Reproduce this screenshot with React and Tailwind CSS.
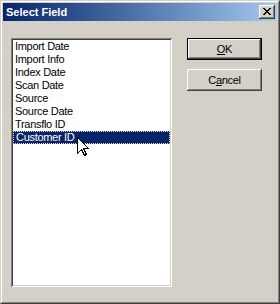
import React from "react";

const fields = [
  "Import Date",
  "Import Info",
  "Index Date",
  "Scan Date",
  "Source",
  "Source Date",
  "Transflo ID",
  "Customer ID",
];

const raised =
  "shadow-[inset_-1px_-1px_0_#404040,inset_1px_1px_0_#ffffff,inset_-2px_-2px_0_#808080]";

const CloseGlyph = () => (
  <svg width="8" height="7" viewBox="0 0 8 7" shapeRendering="crispEdges">
    <path
      fill="#000"
      d="M0 0h2v1H0zM6 0h2v1H6zM1 1h2v1H1zM5 1h2v1H5zM2 2h4v1H2zM3 3h2v1H3zM2 4h4v1H2zM1 5h2v1H1zM5 5h2v1H5zM0 6h2v1H0zM6 6h2v1H6z"
    />
  </svg>
);

const Cursor = () => (
  <svg width="13" height="20" viewBox="0 0 13 20" shapeRendering="crispEdges">
    <path
      d="M0.5 0.5 V16.5 L4.5 12.5 L7.5 18.5 L9.5 17.5 L6.5 11.5 H11.5 Z"
      fill="#fff"
      stroke="#000"
      strokeWidth="1"
    />
  </svg>
);

const App = () => {
  const selected = 7;

  return (
    <div
      className="relative w-[280px] h-[304px] bg-[#d4d0c8] border border-t-[#d4d0c8] border-l-[#d4d0c8] border-r-[#404040] border-b-[#404040] text-[11px] text-black"
      style={{ fontFamily: '"Liberation Sans", Arial, sans-serif' }}
    >
      <div className="h-full border border-t-white border-l-white border-r-[#808080] border-b-[#808080] p-px flex flex-col">
        {/* title bar */}
        <div className="h-[18px] flex items-center justify-between bg-gradient-to-r from-[#0a246a] to-[#a6caf0] pl-[3px] pr-[2px]">
          <span className="font-bold text-white leading-[18px]">Select Field</span>
          <button
            className={`w-[16px] h-[14px] bg-[#d4d0c8] flex items-center justify-center pb-px ${raised}`}
          >
            <CloseGlyph />
          </button>
        </div>

        {/* body */}
        <div className="flex pl-[8px] pt-[17px] tracking-[-0.3px]">
          <div className="w-[161px] h-[249px] bg-white p-[2px] shadow-[inset_1px_1px_0_#808080,inset_-1px_-1px_0_#ffffff,inset_2px_2px_0_#404040,inset_-2px_-2px_0_#d4d0c8]">
            {fields.map((f, i) => (
              <div
                key={f}
                className={
                  i === selected
                    ? "h-[13px] leading-[13px] pl-[3px] bg-[#0a246a] text-white outline-1 outline-dotted outline-[#e8e4b0] -outline-offset-1 whitespace-nowrap"
                    : "h-[13px] leading-[13px] pl-[2px] whitespace-nowrap"
                }
              >
                {f}
              </div>
            ))}
          </div>

          <div className="ml-[15px] flex flex-col gap-[9px]">
            <button className="w-[75px] h-[22px] border border-black bg-[#d4d0c8]">
              <div className={`h-full flex items-center justify-center ${raised}`}>
                <span>
                  <span className="underline underline-offset-[1px]">O</span>K
                </span>
              </div>
            </button>
            <button
              className={`w-[75px] h-[22px] bg-[#d4d0c8] flex items-center justify-center ${raised}`}
            >
              <span>
                C<span className="underline underline-offset-[1px]">a</span>ncel
              </span>
            </button>
          </div>
        </div>
      </div>

      <div className="absolute left-[76px] top-[136px]">
        <Cursor />
      </div>
    </div>
  );
};

export default App;
